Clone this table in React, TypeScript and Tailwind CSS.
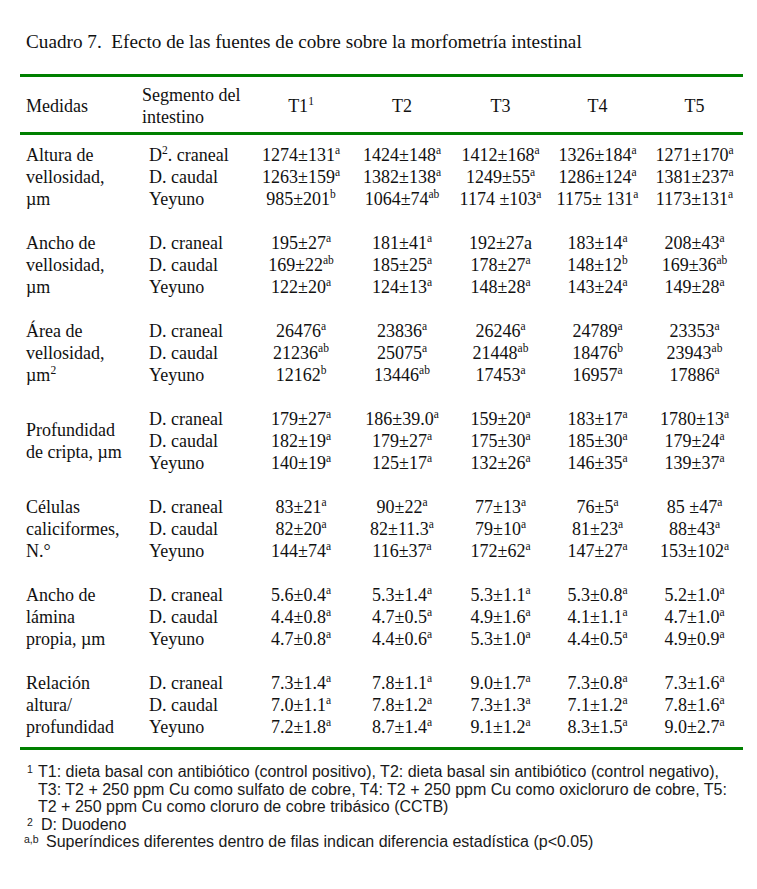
import React from 'react';

type Group = {
  label: React.ReactNode[];
  segments: React.ReactNode[];
  values: string[][];
};

const Sup: React.FC<{ children: React.ReactNode }> = ({ children }) => (
  <sup className="text-[11.5px] top-[-7px]">{children}</sup>
);

// "1274±131^a" -> main text + superscript
const Cell: React.FC<{ v: string }> = ({ v }) => {
  const [main, sup] = v.split('^');
  return (
    <div className="h-[22px] leading-[22px] text-center whitespace-pre">
      {main}
      {sup && <Sup>{sup}</Sup>}
    </div>
  );
};

const seg = ['D. craneal', 'D. caudal', 'Yeyuno'];

const groups: Group[] = [
  {
    label: ['Altura de', 'vellosidad,', 'µm'],
    segments: [
      <>
        D<Sup>2</Sup>. craneal
      </>,
      'D. caudal',
      'Yeyuno',
    ],
    values: [
      ['1274±131^a', '1263±159^a', '985±201^b'],
      ['1424±148^a', '1382±138^a', '1064±74^ab'],
      ['1412±168^a', '1249±55^a', '1174 ±103^a'],
      ['1326±184^a', '1286±124^a', '1175± 131^a'],
      ['1271±170^a', '1381±237^a', '1173±131^a'],
    ],
  },
  {
    label: ['Ancho de', 'vellosidad,', 'µm'],
    segments: seg,
    values: [
      ['195±27^a', '169±22^ab', '122±20^a'],
      ['181±41^a', '185±25^a', '124±13^a'],
      ['192±27a', '178±27^a', '148±28^a'],
      ['183±14^a', '148±12^b', '143±24^a'],
      ['208±43^a', '169±36^ab', '149±28^a'],
    ],
  },
  {
    label: [
      'Área de',
      'vellosidad,',
      <>
        µm<Sup>2</Sup>
      </>,
    ],
    segments: seg,
    values: [
      ['26476^a', '21236^ab', '12162^b'],
      ['23836^a', '25075^a', '13446^ab'],
      ['26246^a', '21448^ab', '17453^a'],
      ['24789^a', '18476^b', '16957^a'],
      ['23353^a', '23943^ab', '17886^a'],
    ],
  },
  {
    label: ['Profundidad', 'de cripta, µm'],
    segments: seg,
    values: [
      ['179±27^a', '182±19^a', '140±19^a'],
      ['186±39.0^a', '179±27^a', '125±17^a'],
      ['159±20^a', '175±30^a', '132±26^a'],
      ['183±17^a', '185±30^a', '146±35^a'],
      ['1780±13^a', '179±24^a', '139±37^a'],
    ],
  },
  {
    label: ['Células', 'caliciformes,', 'N.°'],
    segments: seg,
    values: [
      ['83±21^a', '82±20^a', '144±74^a'],
      ['90±22^a', '82±11.3^a', '116±37^a'],
      ['77±13^a', '79±10^a', '172±62^a'],
      ['76±5^a', '81±23^a', '147±27^a'],
      ['85 ±47^a', '88±43^a', '153±102^a'],
    ],
  },
  {
    label: ['Ancho de', 'lámina', 'propia, µm'],
    segments: seg,
    values: [
      ['5.6±0.4^a', '4.4±0.8^a', '4.7±0.8^a'],
      ['5.3±1.4^a', '4.7±0.5^a', '4.4±0.6^a'],
      ['5.3±1.1^a', '4.9±1.6^a', '5.3±1.0^a'],
      ['5.3±0.8^a', '4.1±1.1^a', '4.4±0.5^a'],
      ['5.2±1.0^a', '4.7±1.0^a', '4.9±0.9^a'],
    ],
  },
  {
    label: ['Relación', 'altura/', 'profundidad'],
    segments: seg,
    values: [
      ['7.3±1.4^a', '7.0±1.1^a', '7.2±1.8^a'],
      ['7.8±1.1^a', '7.8±1.2^a', '8.7±1.4^a'],
      ['9.0±1.7^a', '7.3±1.3^a', '9.1±1.2^a'],
      ['7.3±0.8^a', '7.1±1.2^a', '8.3±1.5^a'],
      ['7.3±1.6^a', '7.8±1.6^a', '9.0±2.7^a'],
    ],
  },
];

const cols = 'grid grid-cols-[123px_101px_102px_100px_97px_97px_97px] pl-[6px]';

export default function App() {
  return (
    <div className="w-[757px] h-[889px] bg-white text-[#111] font-['Liberation_Serif',serif] pt-[31px]">
      <div className="pl-[26px] text-[19.2px] leading-[22px]">
        Cuadro 7.&nbsp; Efecto de las fuentes de cobre sobre la morfometría intestinal
      </div>

      <div className="ml-[20px] w-[723px] mt-[21px] border-t-[3px] border-b-[3px] border-[#008000]">
        {/* header */}
        <div className={`${cols} pt-[7px] pb-[4px] text-[18px] items-center`}>
          <div className="leading-[22px]">Medidas</div>
          <div className="leading-[22px] ml-[-7px]">
            <div>Segmento del</div>
            <div>intestino</div>
          </div>
          {['T1', 'T2', 'T3', 'T4', 'T5'].map((t, i) => (
            <div key={t} className="text-center leading-[22px]">
              {t}
              {i === 0 && <Sup>1</Sup>}
            </div>
          ))}
        </div>
      </div>

      <div className="ml-[20px] w-[723px] border-b-[3px] border-[#008000] pt-[9px] pb-[9px] text-[18px] flex flex-col gap-[22px]">
        {groups.map((g, gi) => (
          <div key={gi} className={cols}>
            <div className="flex flex-col justify-center">
              {g.label.map((l, li) => (
                <div key={li} className="leading-[22px] whitespace-nowrap">
                  {l}
                </div>
              ))}
            </div>
            <div>
              {g.segments.map((s, si) => (
                <div key={si} className="h-[22px] leading-[22px] whitespace-nowrap">
                  {s}
                </div>
              ))}
            </div>
            {g.values.map((col, ci) => (
              <div key={ci}>
                {col.map((v, vi) => (
                  <Cell key={vi} v={v} />
                ))}
              </div>
            ))}
          </div>
        ))}
      </div>

      <div className="pt-[13px] font-['Liberation_Sans',Arial,sans-serif] text-[16px] leading-[17.5px] text-[#1a1a1a]">
        <div className="flex">
          <span className="w-[38px] pl-[27px] text-[10.5px] leading-[12px]">1</span>
          <div>
            T1: dieta basal con antibiótico (control positivo), T2: dieta basal sin antibiótico (control negativo),
            <br />
            T3: T2 + 250 ppm Cu como sulfato de cobre, T4: T2 + 250 ppm Cu como oxicloruro de cobre, T5:
            <br />
            T2 + 250 ppm Cu como cloruro de cobre tribásico (CCTB)
          </div>
        </div>
        <div className="flex">
          <span className="w-[41px] pl-[27px] text-[10.5px] leading-[12px]">2</span>
          <div>D: Duodeno</div>
        </div>
        <div className="flex">
          <span className="w-[46px] pl-[24px] text-[10.5px] leading-[12px]">a,b</span>
          <div>Superíndices diferentes dentro de filas indican diferencia estadística (p&lt;0.05)</div>
        </div>
      </div>
    </div>
  );
}
